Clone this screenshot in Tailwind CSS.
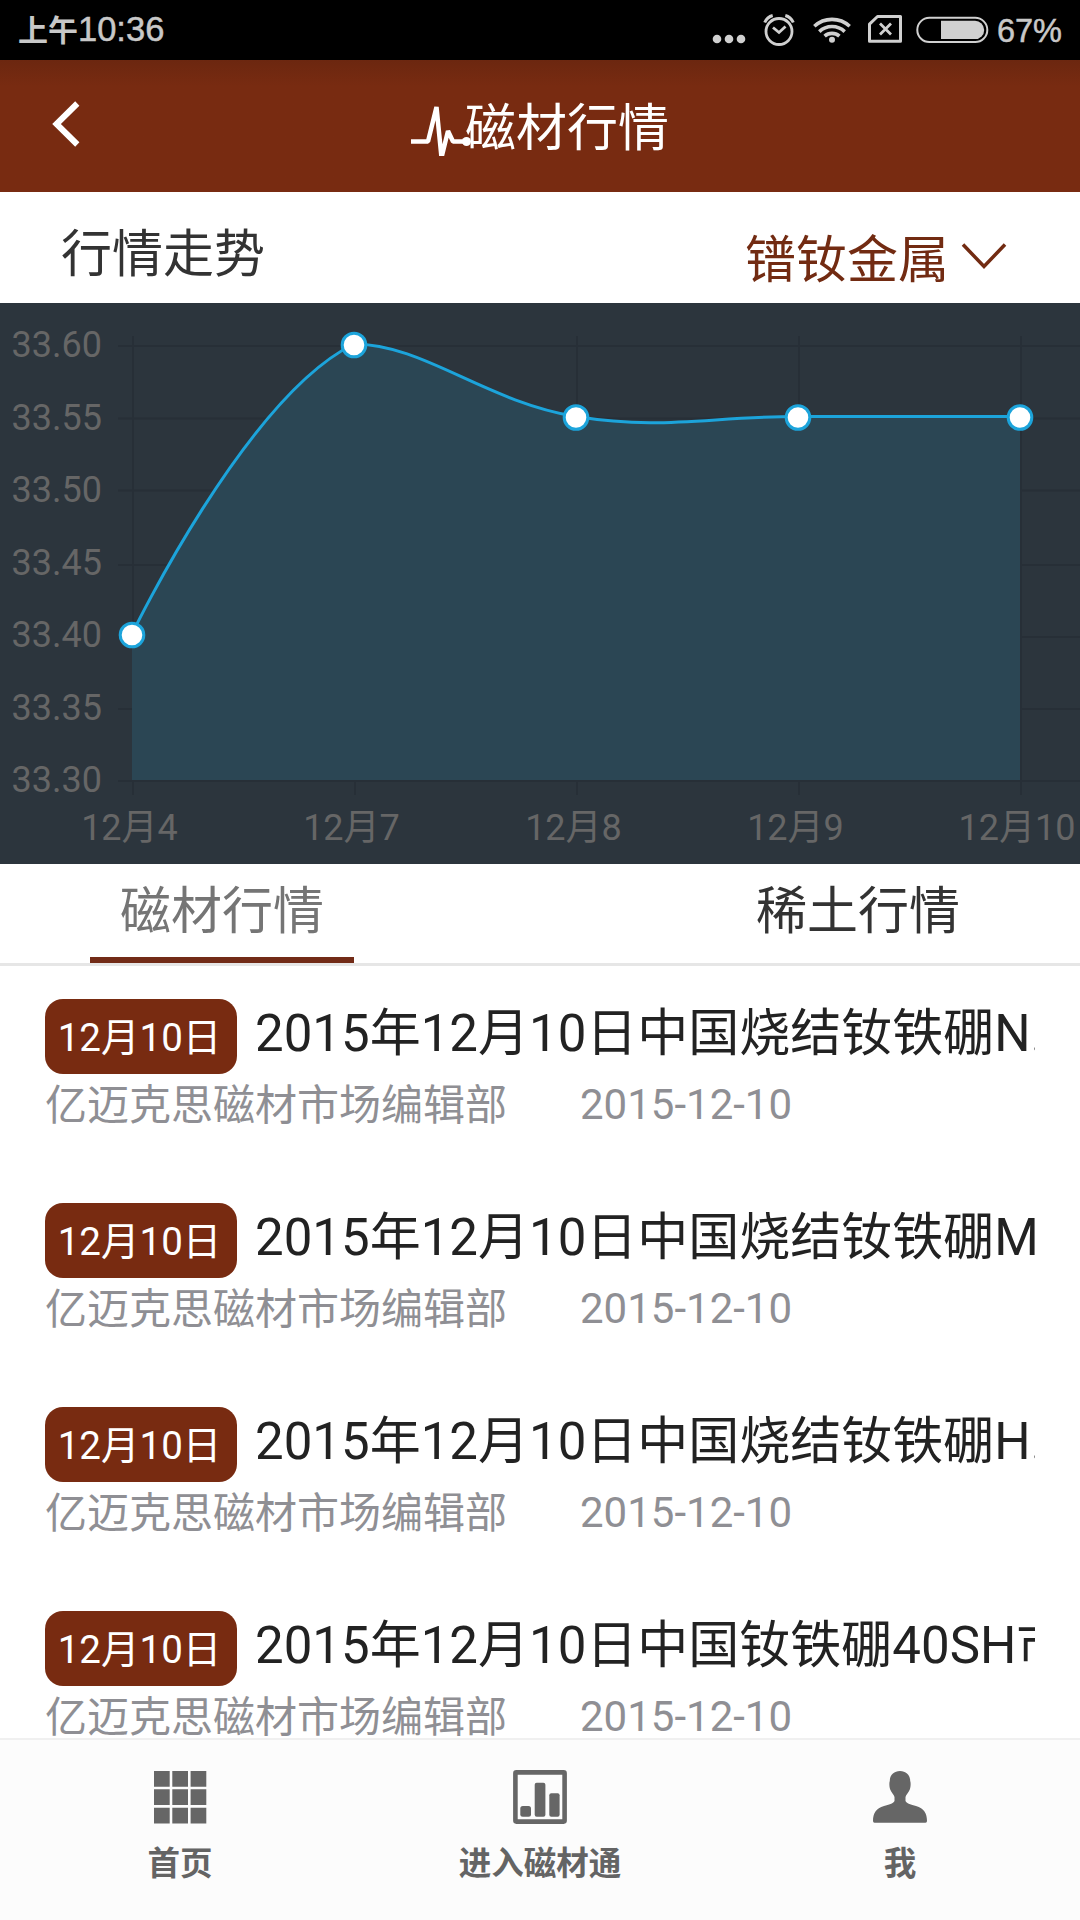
<!DOCTYPE html>
<html lang="zh-CN">
<head>
<meta charset="utf-8">
<title>磁材行情</title>
<script src="https://cdn.jsdelivr.net/npm/@tailwindcss/browser@4"></script>
</head>
<body class="bg-white">
<div class="flex h-[1920px] w-[1080px] flex-col overflow-hidden bg-white font-[Roboto,'Noto_Sans_CJK_SC',sans-serif] text-[51px] text-[#333]">

  <!-- status bar -->
  <div class="flex h-[60px] shrink-0 items-center justify-between bg-black pr-[18px] pl-[18px] font-['Liberation_Sans','Noto_Sans_CJK_SC',sans-serif] text-[#c8c8c8]">
    <div class="flex items-baseline leading-[58px]"><span class="text-[30px] font-bold">上午</span><span class="text-[34.500px] [-webkit-text-stroke:0.5px_#c8c8c8]">10:36</span></div>
    <div class="flex items-center">
      <svg class="h-[60px] w-[284px]" viewBox="710 0 284 60" fill="none" stroke="#d0d0d0">
        <g fill="#d0d0d0" stroke="none"><circle cx="717" cy="39" r="4.3"/><circle cx="729" cy="39" r="4.3"/><circle cx="741" cy="39" r="4.3"/></g>
        <g stroke-width="2.8"><circle cx="779" cy="31.5" r="13"/><path d="M773 27.5l6 5 6.500-6"/><path d="M764.700 22.500q2.500-5.500 8-7M793.300 22.500q-2.500-5.500-8-7" stroke-width="3"/></g>
        <g stroke-width="3.600"><path d="M814.300 26.300a26 26 0 0 1 35.400 0"/><path d="M819.300 31.600a18.500 18.500 0 0 1 25.400 0"/><path d="M824.600 36.200a11 11 0 0 1 14.800 0"/></g>
        <circle cx="832" cy="39.800" r="3" fill="#d0d0d0" stroke="none"/>
        <path d="M877.500 16.500h23v24.700h-31v-17z" stroke-width="3" stroke-linejoin="round"/>
        <path d="M880 23.500l11 11m0-11l-11 11" stroke-width="2.800"/>
        <rect x="917.300" y="17.800" width="70" height="24.200" rx="12.100" stroke-width="2"/>
        <path d="M941 20.700h34a9.200 9.200 0 0 1 0 18.400h-34z" fill="#d0d0d0" stroke="none"/>
      </svg>
      <span class="ml-[3px] pt-[2px] text-[32.500px] leading-[60px] [-webkit-text-stroke:0.5px_#c8c8c8]">67%</span>
    </div>
  </div>

  <!-- title bar -->
  <header class="relative flex h-[132px] shrink-0 items-center justify-center bg-[#782b11] bg-linear-to-b from-[#6c2710] to-[#782b11] to-20% text-white">
    <svg class="absolute top-[40px] left-[50px] h-[48px] w-[32px]" viewBox="50 100 32 48" fill="none" stroke="#fff" stroke-width="6"><path d="M77.300 103.500L56.500 124l20.800 20.500"/></svg>
    <svg class="h-[60px] w-[60px]" viewBox="411 95 60 60" fill="none" stroke="#fff" stroke-width="4.500" stroke-linejoin="bevel"><path d="M411 140.500h17l8.500-34.500 5 50.500 6.500-26.500 5 10.500h14"/><circle cx="466.500" cy="140.500" r="4.500" fill="#fff" stroke="none"/></svg>
    <h1 class="-ml-[6px] pt-[6px] leading-[126px]">磁材行情</h1>
  </header>

  <!-- trend selector -->
  <div class="flex h-[111px] shrink-0 justify-between pr-[72px] pl-[61px]">
    <h2 class="leading-[126px]">行情走势</h2>
    <div class="flex text-[#722b12]">
      <span class="leading-[137px]">镨钕金属</span>
      <svg class="mt-[48px] ml-[11px] h-[32px] w-[48px]" viewBox="960 240 48 32" fill="none" stroke="#722b12" stroke-width="3.500"><path d="M963 244.500l21 22 21-22"/></svg>
    </div>
  </div>

  <!-- price chart -->
  <svg class="h-[561px] w-[1080px] shrink-0 bg-[#2c353d]" viewBox="0 303 1080 561">
    <g stroke="#272f37" stroke-width="2" fill="none">
      <path d="M118 346H1080M118 418.500H1080M118 490.500H1080M118 565H1080M118 637H1080M118 709H1080M118 781H1080"/>
      <path d="M133 336V795M355 336V795M577 336V795M799 336V795M1021 336V795"/>
    </g>
    <path fill="#2b4654" d="M132 634C132 634 246 397 354 344C423 344 485 401.500 576 416.500C662.600 430.500 709 416.500 798 416.500H1020V780H132Z"/>
    <path fill="none" stroke="#1ca4db" stroke-width="3" d="M132 634C132 634 246 397 354 344C423 344 485 401.500 576 416.500C662.600 430.500 709 416.500 798 416.500H1020"/>
    <g fill="#fff" stroke="#1ca4db" stroke-width="3"><circle cx="132" cy="635" r="11.800"/><circle cx="354" cy="345" r="11.800"/><circle cx="576" cy="417.500" r="11.800"/><circle cx="798" cy="417.500" r="11.800"/><circle cx="1020" cy="417.500" r="11.800"/></g>
    <g fill="#666" font-size="36" text-anchor="end">
      <text x="102" y="357">33.60</text><text x="102" y="429.500">33.55</text><text x="102" y="502">33.50</text><text x="102" y="575">33.45</text><text x="102" y="647">33.40</text><text x="102" y="720">33.35</text><text x="102" y="792">33.30</text>
    </g>
    <g fill="#666" font-size="36" text-anchor="middle">
      <text x="129.500" y="840">12月4</text><text x="351.500" y="840">12月7</text><text x="573.500" y="840">12月8</text><text x="795.500" y="840">12月9</text><text x="1017" y="840">12月10</text>
    </g>
  </svg>

  <!-- tabs -->
  <nav class="flex h-[102px] shrink-0 items-start justify-between border-b-3 border-[#e6e6e6] px-[90px]">
    <div class="h-[99px] w-[264px] border-b-6 border-[#722b17] text-center leading-[95px] text-[#757575]">磁材行情</div>
    <div class="w-[264px] text-center leading-[95px]">稀土行情</div>
  </nav>

  <!-- news list -->
  <main class="min-h-0 flex-1 overflow-hidden px-[45px] pt-[33px]">
    <article class="h-[204px]">
      <div class="flex"><span class="mr-[18px] h-[75px] w-[192px] shrink-0 rounded-[18px] bg-[#782b11] pr-[3px] text-center text-[38.500px] leading-[77px] text-white">12月10日</span><h3 class="overflow-hidden leading-[69px] whitespace-nowrap text-[#222]">2015年12月10日中国烧结钕铁硼N…</h3></div>
      <p class="flex gap-[73px] text-[42px] leading-[61px] text-[#8f8f94]"><span class="pt-px">亿迈克思磁材市场编辑部</span><span>2015-12-10</span></p>
    </article>
    <article class="h-[204px]">
      <div class="flex"><span class="mr-[18px] h-[75px] w-[192px] shrink-0 rounded-[18px] bg-[#782b11] pr-[3px] text-center text-[38.500px] leading-[77px] text-white">12月10日</span><h3 class="overflow-hidden leading-[69px] whitespace-nowrap text-[#222]">2015年12月10日中国烧结钕铁硼M</h3></div>
      <p class="flex gap-[73px] text-[42px] leading-[61px] text-[#8f8f94]"><span class="pt-px">亿迈克思磁材市场编辑部</span><span>2015-12-10</span></p>
    </article>
    <article class="h-[204px]">
      <div class="flex"><span class="mr-[18px] h-[75px] w-[192px] shrink-0 rounded-[18px] bg-[#782b11] pr-[3px] text-center text-[38.500px] leading-[77px] text-white">12月10日</span><h3 class="overflow-hidden leading-[69px] whitespace-nowrap text-[#222]">2015年12月10日中国烧结钕铁硼H…</h3></div>
      <p class="flex gap-[73px] text-[42px] leading-[61px] text-[#8f8f94]"><span class="pt-px">亿迈克思磁材市场编辑部</span><span>2015-12-10</span></p>
    </article>
    <article class="h-[204px]">
      <div class="flex"><span class="mr-[18px] h-[75px] w-[192px] shrink-0 rounded-[18px] bg-[#782b11] pr-[3px] text-center text-[38.500px] leading-[77px] text-white">12月10日</span><h3 class="overflow-hidden leading-[69px] whitespace-nowrap text-[#222]">2015年12月10日中国钕铁硼40SH市</h3></div>
      <p class="flex gap-[73px] text-[42px] leading-[61px] text-[#8f8f94]"><span class="pt-px">亿迈克思磁材市场编辑部</span><span>2015-12-10</span></p>
    </article>
  </main>

  <!-- bottom navigation -->
  <footer class="grid h-[182px] shrink-0 grid-cols-3 border-t-2 border-[#f0f0f0] bg-[#fcfcfc] text-[32.500px] font-bold text-[#646464]">
    <div class="flex flex-col items-center pt-[30px]">
      <svg class="h-[54px] w-[54px]" viewBox="0 0 54 54" fill="#666"><path d="M1 1h15.700v15.700H1zM19.300 1H35v15.700H19.300zM37.600 1h15.700v15.700H37.600zM1 19.300h15.700V35H1zM19.300 19.300H35V35H19.300zM37.600 19.300h15.700V35H37.600zM1 37.800h15.700v15.700H1zM19.300 37.800H35v15.700H19.300zM37.600 37.800h15.700v15.700H37.600z"/></svg>
      <span class="mt-[16px] leading-[48px]">首页</span>
    </div>
    <div class="flex flex-col items-center pt-[30px]">
      <svg class="h-[54px] w-[54px]" viewBox="0 0 54 54" fill="#666"><rect x="2.400" y="2.400" width="49.200" height="49.200" rx="1" fill="none" stroke="#666" stroke-width="4.600"/><rect x="7.300" y="36" width="10.700" height="10.700" rx="2.500"/><rect x="21.700" y="12.700" width="10.700" height="34" rx="2"/><rect x="36.300" y="23.300" width="10.300" height="23.400" rx="2"/></svg>
      <span class="mt-[16px] leading-[48px]">进入磁材通</span>
    </div>
    <div class="flex flex-col items-center pt-[30px]">
      <svg class="h-[54px] w-[54px]" viewBox="0 0 54 54" fill="#666"><path d="M27 1C21 1 16.800 5 16.800 11C16 13 16.400 17 17.200 19.500C18.200 22.500 21 24.500 21.500 27V31C20 34 16 34.500 11 36C3 38.500 0 43 0 51Q0 52.700 1.500 52.700H52.500Q54 52.700 54 51C54 43 51 38.500 43 36C38 34.500 34 34 32.500 31V27C33 24.500 35.800 22.500 36.800 19.500C37.600 17 38 13 37.200 11C37.200 5 33 1 27 1Z"/></svg>
      <span class="mt-[16px] leading-[48px]">我</span>
    </div>
  </footer>
</div>
</body>
</html>
